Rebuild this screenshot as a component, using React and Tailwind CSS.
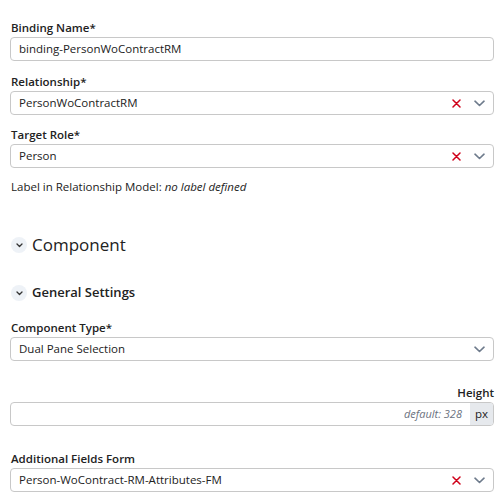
const font = { fontFamily: '"Open Sans", "Noto Sans", sans-serif' };

function ClearIcon() {
  return (
    <svg width="9" height="9" viewBox="0 0 9 9" className="mr-[13px] shrink-0">
      <path d="M1 1 L8 8 M8 1 L1 8" stroke="#d0021b" strokeWidth="1.5" strokeLinecap="round" />
    </svg>
  );
}

function CaretIcon() {
  return (
    <svg width="11" height="7" viewBox="0 0 11 7" className="shrink-0">
      <path d="M1 1.2 L5.5 5.5 L10 1.2" fill="none" stroke="#6e7b8c" strokeWidth="1.6" strokeLinecap="round" strokeLinejoin="round" />
    </svg>
  );
}

function FieldLabel({ children, right }) {
  return (
    <div
      className={`text-[11.5px] font-semibold text-[#222] leading-[16px] mb-[1px] pl-[1px] ${
        right ? "text-right" : ""
      }`}
    >
      {children}
    </div>
  );
}

function TextBox({ value }) {
  return (
    <div className="h-[24px] border border-[#c8c8c8] rounded-[4px] bg-white flex items-center px-[8px] text-[11.5px] text-[#222]">
      {value}
    </div>
  );
}

function SelectBox({ value, clearable }) {
  return (
    <div className="h-[24px] border border-[#c8c8c8] rounded-[4px] bg-white flex items-center pl-[8px] pr-[8px] text-[11.5px] text-[#222]">
      <span className="flex-1 truncate">{value}</span>
      {clearable && <ClearIcon />}
      <CaretIcon />
    </div>
  );
}

function SectionToggle({ label, big }) {
  return (
    <div className={`flex items-center gap-[5px] ${big ? "h-[24px]" : "h-[20px]"}`}>
      <span className="w-[16px] h-[16px] rounded-full bg-[#eef2f7] flex items-center justify-center">
        <svg width="7" height="5" viewBox="0 0 7 5">
          <path d="M1 1 L3.5 3.5 L6 1" fill="none" stroke="#333" strokeWidth="1.3" strokeLinecap="round" strokeLinejoin="round" />
        </svg>
      </span>
      <span
        className={
          big
            ? "text-[17px] font-medium text-[#222]"
            : "text-[13px] font-semibold text-[#222]"
        }
      >
        {label}
      </span>
    </div>
  );
}

export default function App() {
  return (
    <div className="w-[504px] h-[500px] bg-white px-[10px] pt-[20px]" style={font}>
      <FieldLabel>Binding Name*</FieldLabel>
      <TextBox value="binding-PersonWoContractRM" />

      <div className="mt-[13px]">
        <FieldLabel>Relationship*</FieldLabel>
        <SelectBox value="PersonWoContractRM" clearable />
      </div>

      <div className="mt-[12px]">
        <FieldLabel>Target Role*</FieldLabel>
        <SelectBox value="Person" clearable />
      </div>

      <div className="mt-[10px] text-[11.5px] text-[#222] leading-[18px] pl-[1px]">
        Label in Relationship Model: <i>no label defined</i>
      </div>

      <div className="mt-[37px] pl-[1px]">
        <SectionToggle label="Component" big />
      </div>

      <div className="mt-[26px] pl-[1px]">
        <SectionToggle label="General Settings" />
      </div>

      <div className="mt-[17px]">
        <FieldLabel>Component Type*</FieldLabel>
        <SelectBox value="Dual Pane Selection" />
      </div>

      <div className="mt-[24px]">
        <FieldLabel right>Height</FieldLabel>
        <div className="h-[24px] border border-[#c8c8c8] rounded-[4px] bg-white flex items-stretch overflow-hidden text-[11.5px]">
          <span className="flex-1 flex items-center justify-end pr-[8px] italic text-[11px] text-[#6b7280]">
            default: 328
          </span>
          <span className="w-[23px] bg-[#e6e9ed] flex items-center justify-center text-[#222]">
            px
          </span>
        </div>
      </div>

      <div className="mt-[25px]">
        <FieldLabel>Additional Fields Form</FieldLabel>
        <SelectBox value="Person-WoContract-RM-Attributes-FM" clearable />
      </div>
    </div>
  );
}
